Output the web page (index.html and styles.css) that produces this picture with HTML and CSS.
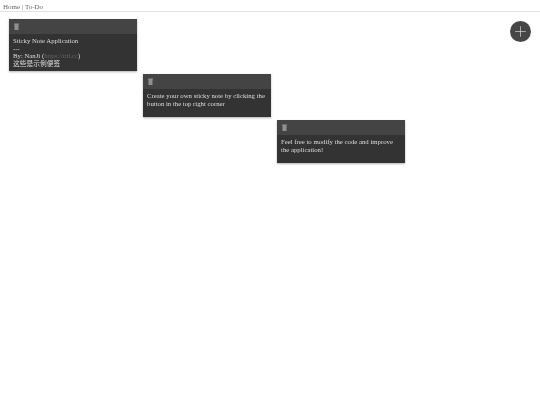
FILE: index.html
```html
<!DOCTYPE html>
<html lang="en">
<head>
<meta charset="utf-8">
<title>To-Do</title>
<link rel="stylesheet" href="styles.css">
</head>
<body>
<div class="page">
<nav class="topbar"><a href="#">Home</a> | <a href="#">To-Do</a></nav>
<main class="board">
  <article class="note note-a">
    <header class="note-head"><svg class="trash" viewBox="0 0 5 7"><path d="M0 0.5h5v1H0zM0.5 1.5h4V7h-4z"/></svg></header>
    <div class="note-body">Sticky Note Application<br>---<br>By: NanJi (<a class="link" href="#">https://ttti.cc</a>)<br><span class="cjk">这些是示例便签</span></div>
  </article>
  <article class="note note-b">
    <header class="note-head"><svg class="trash" viewBox="0 0 5 7"><path d="M0 0.5h5v1H0zM0.5 1.5h4V7h-4z"/></svg></header>
    <div class="note-body">Create your own sticky note by clicking the button in the top right corner</div>
  </article>
  <article class="note note-c">
    <header class="note-head"><svg class="trash" viewBox="0 0 5 7"><path d="M0 0.5h5v1H0zM0.5 1.5h4V7h-4z"/></svg></header>
    <div class="note-body">Feel free to modify the code and improve the application!</div>
  </article>
  <button class="add" aria-label="Add note"><svg viewBox="0 0 22 22"><path d="M11 5.5v11M5.5 11h11"/></svg></button>
</main>
</div>
</body>
</html>
```
FILE: styles.css
```css
html, body { margin: 0; padding: 0; height: 100%; background: #fff; }
body { font-family: "Liberation Serif", "Noto Sans CJK SC", serif; font-size: 6.75px; line-height: 7.5px; overflow: hidden; }
.page { height: 100%; filter: blur(.45px); }
.topbar { padding: 2.5px 3px 0; box-sizing: border-box; height: 12px; border-bottom: 1px solid #e2e2e2; color: #666; font-size: 7px; line-height: 8px; }
.topbar a { color: #666; text-decoration: none; }
.board { position: relative; }
.note { position: absolute; width: 127.5px; background: #333; color: #ddd; box-shadow: 0 1px 2px rgba(0,0,0,.3); }
.note-a { left: 9px; top: 7px; }
.note-b { left: 143px; top: 62px; }
.note-c { left: 277px; top: 108px; }
.note-head { height: 15px; background: #444; display: flex; align-items: center; padding-left: 5px; box-sizing: border-box; }
.trash { width: 5px; height: 7px; fill: #8f8f8f; display: block; }
.note-body { padding: 3px 4px 4px; min-height: 21px; }
.link { color: #666; text-decoration: none; }
.cjk { font-family: "Noto Sans CJK SC", sans-serif; }
.add { position: absolute; right: 9px; top: 9px; width: 21px; height: 21px; padding: 0; border: 0; border-radius: 50%; background: #464646; }
.add svg { display: block; width: 21px; height: 21px; fill: none; stroke: #ccc; stroke-width: .8; }
```
